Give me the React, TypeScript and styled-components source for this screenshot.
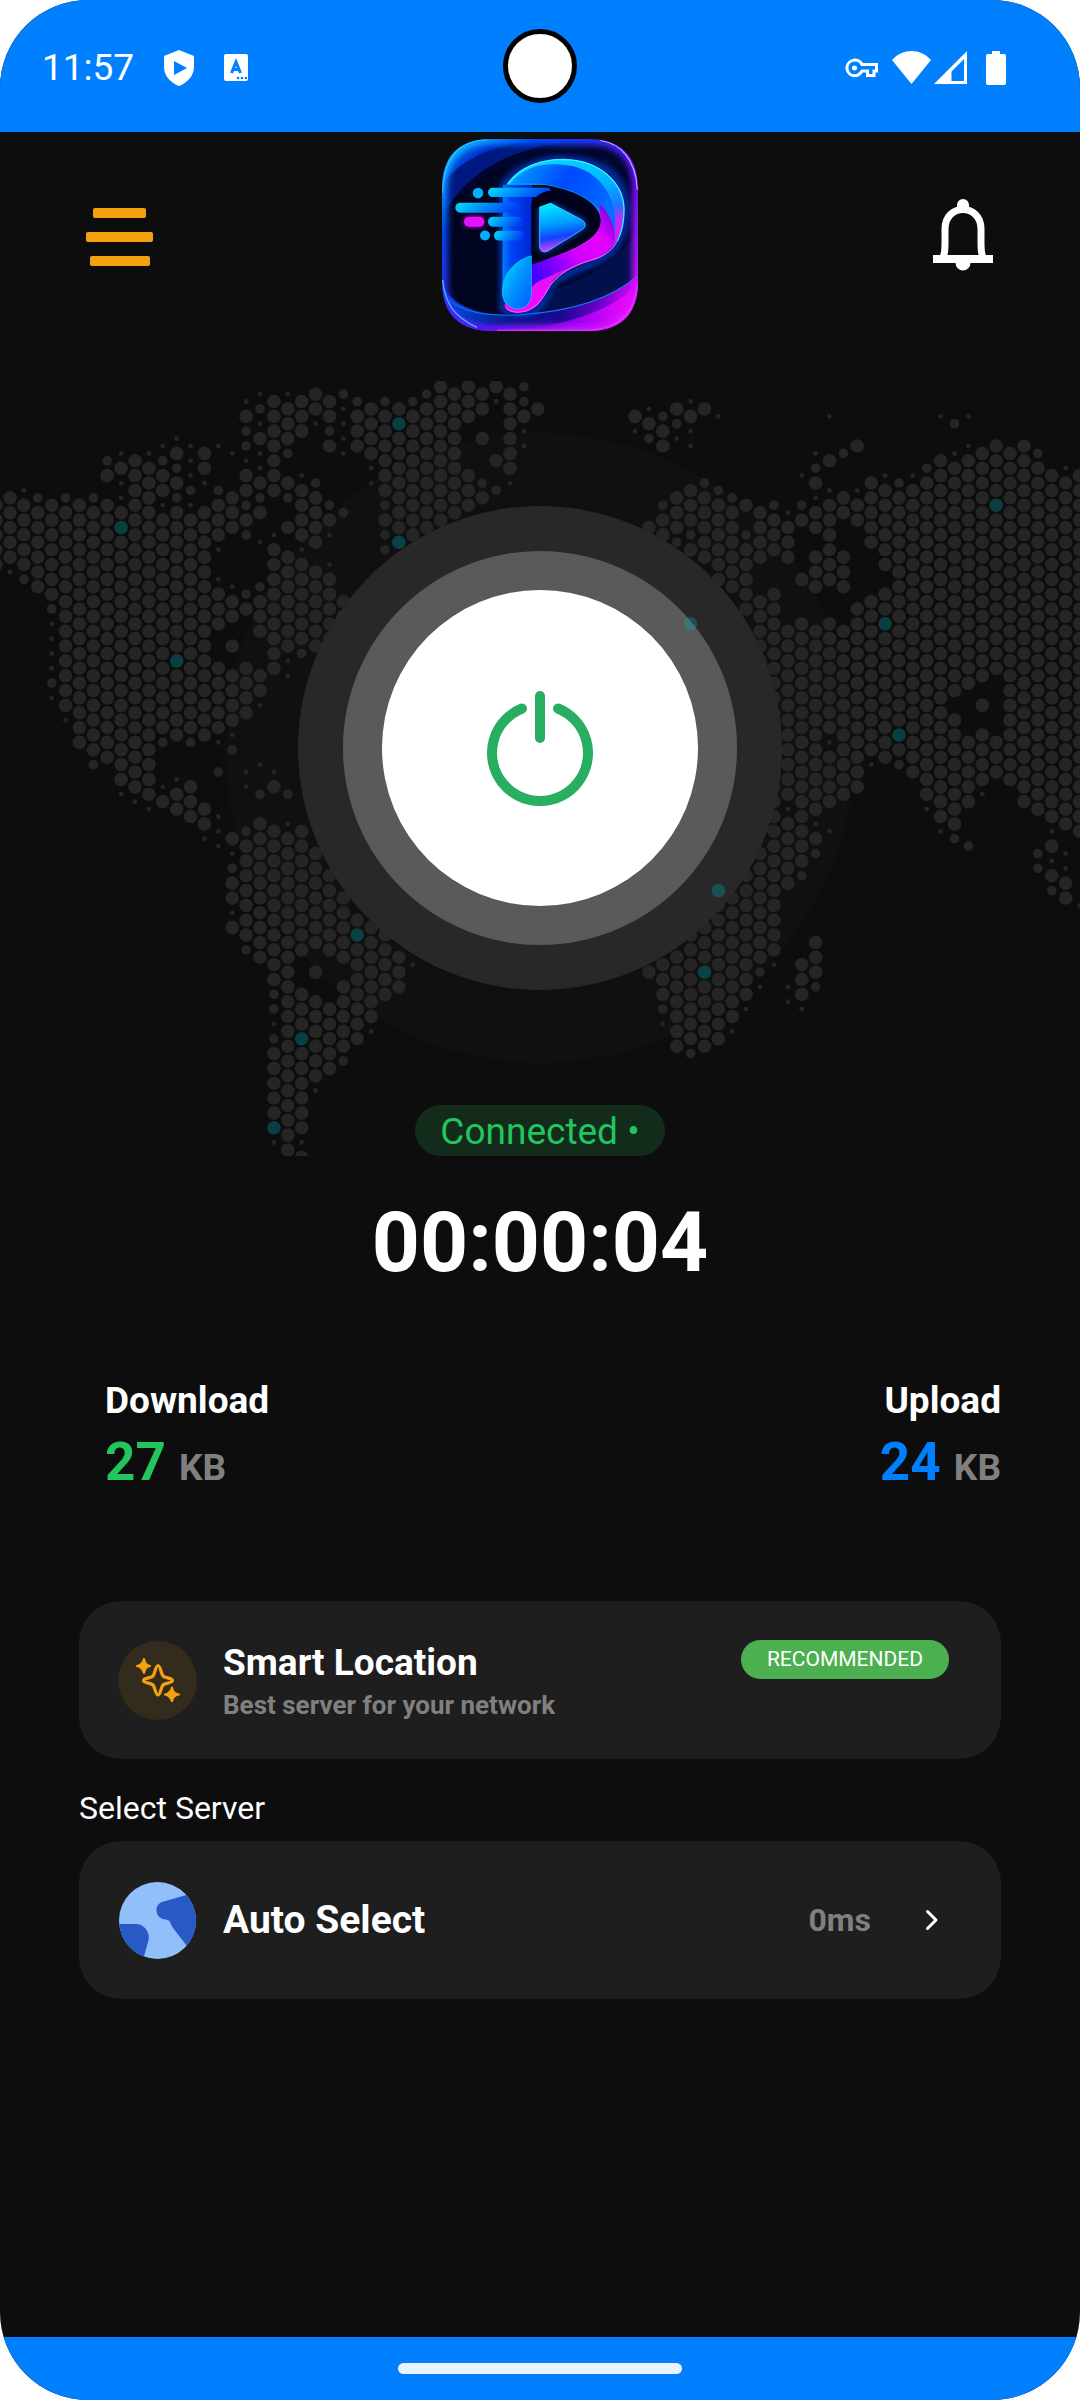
import { useState } from "react";
import styled, { createGlobalStyle } from "styled-components";

// One string per map column, rows counted in half steps from the top.
// "a-b" is a run of dots (every second row), m = medium, s = small, c = highlighted
const MAP_COLUMNS = [
  "16-24",
  "15-23 s25",
  "s14 16-24 m26",
  "m15 17-27",
  "16-28 m30 s32 s34 s36 s38 m40 s42",
  "m15 17-43 s45",
  "16-48",
  "m15 17-49 m51",
  "m10 12 16-50",
  "s9 11 s13 s15 17 c19 21-53 s55",
  "10-54 s56",
  "s9 11-55 s57",
  "s8 m10 12-14 s16 18-46 m48 s54 56",
  "s7 9 m11 13 m15 17-35 c37 39-47 s53 55-57",
  "s8 s10 s12 m14 s16 18-46 m48 54-58",
  "9-11 s13 17-47 57-59 s61",
  "s8 m14 16-20 s22 s26 28-32 38-46 s48 m52 s58 s60 s62",
  "s9 15-19 s27 29-31 35 39-45 s47 m49 61 s63 m65 67-69 s71 73",
  "s2 4 m6 m8 s10 12-14 m16 18 m20 m28 30 38-44 s52 s54 m60 62-74 m76",
  "s1 m3 s5 7 s9 s11 13 m15 17 s21 m27 29-33 39-41 s43 s51 m55 59-77",
  "2-14 s20 22-38 s52 54 60-80 m82 m84 s86 m88 90-98 c100 s102",
  "s1 3-7 m9 13 m15 19 23-35 s37 s39 m55 s59 61-103",
  "2-6 s12 14-20 s22 24-34 m36 60-76 82-86 c88 90-100 s102 104",
  "1-3 s5 m13 15-21 25-35 63-75 79 83-93 s95",
  "2-4 m6 8 m16 18 s20 s24 26-34 66-76 84-92",
  "m1 s3 s5 s7 s9 m17 29-31 69-77 81-89 m91",
  "m2 4-8 72 c74 76-88",
  "3-9 s11 s13 73-85 s87",
  "m2 4-14 m16 18 m20 m22 74-82",
  "3 c5 7-19 c21 77-81",
  "m2 4-20 s78",
  "m1 3-19",
  "0-18",
  "1-17",
  "0-4 12-16",
  "1-3 7 m13 15",
  "0 s2 10 m14",
  "1-11 s13",
  "m0 m2 4 s6 s8",
  "3",
  "",
  "",
  "",
  "",
  "",
  "",
  "4 s6",
  "s3 5 m7 19 79",
  "m4 6-8 m16 18-20 78-82 m84 s86",
  "3 m5 s7 15-19 m21 77-89",
  "s2 4 s6 s8 14-18 m20 22 c32 74-88 m90",
  "3 m13 15-23 73-77 c79 81-89",
  "s4 m14 16-26 c68 70-88",
  "m15 17-27 69-85 s87",
  "16 m20 22-30 66-82 s84",
  "17-23 29-37 63-77 m79 s81",
  "m16 18-22 28-76 s78",
  "s17 19-23 33-55 s57 59-67 s81 s83",
  "s12 m16 18 26 32-64 m66 78-82 s84",
  "s9 m11 13 s15 17-19 23-27 33-57 s59 61 m63 75-79 m81",
  "s4 10 s14 16-26 32-46 s48 50-56 s60",
  "m9 15-17 23-27 33-55",
  "8 s14 16-18 30-54",
  "13-21 29-49 s51",
  "s12 14-24 28-30 c32 34-50",
  "m13 15-45 c47 49 m51",
  "s12 14-52",
  "m11 13-55 s57",
  "s4 10-58 s60",
  "m5 s9 11-41 45-59 m61",
  "s4 s8 10-40 48-56 m62",
  "9-39 43 47-53 s55",
  "8-14 c16 18-38 48-52",
  "9-53",
  "8-56",
  "m9 11-57 m63 m65",
  "12-58 s60 62 s64 66 m68",
  "s11 13-59 s63 s65 67-69",
  "12-60 s70",
  "13-61 71",
];

const DOT_RADIUS: Record<string, number> = { l: 6.8, m: 4.8, s: 2.4, c: 6.8 };

type Dot = { x: number; y: number; kind: string };

const buildDots = (): Dot[] =>
  MAP_COLUMNS.flatMap((column, index) =>
    column
      .split(" ")
      .filter(Boolean)
      .flatMap((token) => {
        const kind = /^[msc]/.test(token) ? token[0] : "l";
        const [from, to = from] = token.replace(/^[msc]/, "").split("-").map(Number);
        const dots: Dot[] = [];
        for (let row = from; row <= to; row += 2) {
          dots.push({ x: 10 + (index - 1) * 13.89, y: 5.7 + row * 7.41, kind });
        }
        return dots;
      })
  );

const dots = buildDots();
const landDots = dots.filter((dot) => dot.kind !== "c");
const pinDots = dots.filter((dot) => dot.kind === "c");

const WorldMap = () => (
  <MapLayer viewBox="0 0 1080 775" preserveAspectRatio="xMidYMid slice" aria-hidden="true">
    <circle cx="540" cy="367" r="315" fill="#101010" />
    {landDots.map((dot) => (
      <circle key={`${dot.x}-${dot.y}`} cx={dot.x} cy={dot.y} r={DOT_RADIUS[dot.kind]} fill="#252525" />
    ))}
  </MapLayer>
);

const MapPins = () => (
  <MapLayer viewBox="0 0 1080 775" preserveAspectRatio="xMidYMid slice" aria-hidden="true">
    {pinDots.map((dot) => (
      <circle key={`${dot.x}-${dot.y}`} cx={dot.x} cy={dot.y} r={DOT_RADIUS.c} fill="rgba(0,180,190,0.3)" />
    ))}
  </MapLayer>
);

const Logo = () => (
  <svg width="196" height="192" viewBox="65 28 588 575" preserveAspectRatio="none" role="img" aria-label="Logo">
    <defs>
      <clipPath id="tile">
        <path d="M65 178C65 80 115 28 215 28H503C603 28 653 80 653 178V453C653 551 603 603 503 603H215C115 603 65 551 65 453Z" />
      </clipPath>
      <linearGradient id="edge" x1="0" y1="0" x2="1" y2="1">
        <stop offset="0" stopColor="#14d8ff" />
        <stop offset="0.25" stopColor="#0048ff" />
        <stop offset="0.6" stopColor="#6a10ff" />
        <stop offset="1" stopColor="#f31cff" />
      </linearGradient>
      <linearGradient id="corner" x1="0" y1="0" x2="1" y2="0.6">
        <stop offset="0" stopColor="#0090ff" />
        <stop offset="0.5" stopColor="#0026c8" />
        <stop offset="1" stopColor="#000a50" />
      </linearGradient>
      <linearGradient id="wave" x1="0" y1="0" x2="1" y2="0">
        <stop offset="0" stopColor="#0050e0" />
        <stop offset="0.35" stopColor="#021a80" />
        <stop offset="0.6" stopColor="#1a0890" />
        <stop offset="0.8" stopColor="#6a00c8" />
        <stop offset="1" stopColor="#e008ff" />
      </linearGradient>
      <linearGradient id="swell" x1="0" y1="0" x2="1" y2="0">
        <stop offset="0" stopColor="#4a00d0" stopOpacity="0" />
        <stop offset="0.5" stopColor="#9000f0" />
        <stop offset="1" stopColor="#ff08ff" />
      </linearGradient>
      <linearGradient id="loop" x1="0" y1="0" x2="0.25" y2="1">
        <stop offset="0" stopColor="#00e4ff" />
        <stop offset="0.35" stopColor="#00b4ff" />
        <stop offset="0.5" stopColor="#1c78ff" />
        <stop offset="0.6" stopColor="#c428ff" />
        <stop offset="1" stopColor="#ff00f0" />
      </linearGradient>
      <linearGradient id="band" x1="0" y1="0" x2="1" y2="0.5">
        <stop offset="0" stopColor="#00a8ff" />
        <stop offset="0.5" stopColor="#0048ff" />
        <stop offset="1" stopColor="#0070ff" />
      </linearGradient>
      <linearGradient id="tail" x1="0" y1="0.7" x2="1" y2="0">
        <stop offset="0" stopColor="#4a00ff" />
        <stop offset="0.4" stopColor="#d000ff" />
        <stop offset="0.7" stopColor="#e800ff" />
        <stop offset="1" stopColor="#5800d8" />
      </linearGradient>
      <linearGradient id="stem" x1="0" y1="0" x2="1" y2="0">
        <stop offset="0" stopColor="#0080ff" />
        <stop offset="0.3" stopColor="#0044f4" />
        <stop offset="1" stopColor="#0024d4" />
      </linearGradient>
      <linearGradient id="leaf" x1="0" y1="0" x2="1" y2="1">
        <stop offset="0" stopColor="#00e8ff" />
        <stop offset="0.5" stopColor="#0094ff" />
        <stop offset="1" stopColor="#0058ff" />
      </linearGradient>
      <linearGradient id="play" x1="0.2" y1="0" x2="0.35" y2="1">
        <stop offset="0" stopColor="#00f4ff" />
        <stop offset="0.45" stopColor="#009cff" />
        <stop offset="0.72" stopColor="#1440ff" />
        <stop offset="1" stopColor="#ff40ff" />
      </linearGradient>
      <linearGradient id="speed" x1="0" y1="0" x2="1" y2="0.2">
        <stop offset="0" stopColor="#00dcff" />
        <stop offset="1" stopColor="#0040f4" />
      </linearGradient>
      <filter id="glow" x="-30%" y="-30%" width="160%" height="160%">
        <feGaussianBlur stdDeviation="9" />
      </filter>
    </defs>
    <g clipPath="url(#tile)">
      <rect x="65" y="28" width="588" height="575" fill="#010420" />
      <path d="M65 28H653V330C610 390 540 440 440 480L250 110C170 150 100 210 65 260Z" fill="#01062e" />
      <path d="M65 260V28H500C260 50 140 130 65 260Z" fill="#001880" />
      <path d="M65 165V28H350C220 45 120 90 65 165Z" fill="url(#corner)" />
      <path d="M653 300C600 390 520 440 400 480L330 555C480 545 590 500 653 436Z" fill="#02104e" />
      <path d="M65 470C110 540 200 560 300 555C460 545 580 505 653 436V603H65Z" fill="url(#wave)" />
      <path d="M250 603C440 590 580 540 653 460V603Z" fill="url(#swell)" />
      <path d="M85 510C130 548 210 560 300 554C460 544 580 502 653 436" fill="none" stroke="#1c74ff" strokeWidth="3" />
      <path
        d="M65 178C65 80 115 28 215 28H503C603 28 653 80 653 178V453C653 551 603 603 503 603H215C115 603 65 551 65 453Z"
        fill="none" stroke="url(#edge)" strokeWidth="34" filter="url(#glow)"
      />
      <g filter="url(#glow)" opacity="0.8" fill="none" stroke="#0050ff" strokeWidth="16">
        <path d="M248 540V165C330 70 480 75 560 120C630 170 630 290 580 360C530 410 430 420 390 470C370 520 340 560 290 548Z" />
      </g>
      <path d="M248 165H335V470C335 560 248 560 246 490Z" fill="url(#stem)" />
      <path d="M258 165C300 105 370 88 430 88C540 90 612 160 612 240C612 330 565 370 520 388C450 412 415 430 395 455C370 500 350 548 292 548C265 548 256 538 252 525L333 402C420 370 540 340 540 272C540 215 450 175 370 165Z" fill="url(#loop)" />
      <path d="M270 162C310 112 360 100 420 104C530 110 582 190 584 270V335C570 230 470 170 350 162Z" fill="url(#band)" />
      <path d="M333 404C420 372 545 345 541 270L538 222C570 255 584 290 584 330C560 390 480 395 420 425C380 445 350 450 333 474Z" fill="url(#tail)" />
      <path d="M390 463C370 500 350 545 292 546C270 546 262 540 254 530C300 540 330 500 350 478Z" fill="#f208ff" />
      <path d="M333 405V225C336 195 365 180 410 180C470 182 541 225 541 272C541 335 430 370 333 405Z" fill="#02021c" />
      <path d="M333 378V495C330 552 248 552 246 485C248 425 290 390 333 378Z" fill="url(#leaf)" stroke="#00e0ff" strokeWidth="2" />
      <path d="M262 163C300 108 370 89 430 89C540 92 611 160 611 240C611 280 604 310 590 335" fill="none" stroke="#3ceeff" strokeWidth="4" />
      <path d="M590 335C570 370 540 383 510 392C440 412 410 440 390 465C370 500 350 547 292 547C275 547 262 541 256 532" fill="none" stroke="#ff5cff" strokeWidth="3" />
      <path d="M358 235C358 216 374 212 390 220L484 270C498 279 498 291 484 300L386 361C372 370 358 366 358 350Z" fill="#0060ff" filter="url(#glow)" />
      <path d="M358 235C358 216 374 212 390 220L484 270C498 279 498 291 484 300L386 361C372 370 358 366 358 350Z" fill="url(#play)" stroke="#58e4ff" strokeWidth="2" />
      <rect x="203" y="174" width="190" height="28" rx="14" fill="url(#speed)" />
      <path d="M333 240C336 205 352 188 400 180V215Z" fill="#02021c" />
      <rect x="105" y="219" width="194" height="30" rx="15" fill="url(#speed)" />
      <rect x="203" y="261" width="104" height="30" rx="15" fill="url(#speed)" />
      <rect x="221" y="303" width="91" height="29" rx="14" fill="url(#speed)" />
      <circle cx="173" cy="190" r="16" fill="#00b0ff" />
      <circle cx="194" cy="317" r="15" fill="#00b0ff" />
      <rect x="131" y="261" width="61" height="30" rx="15" fill="#ff10f0" filter="url(#glow)" opacity="0.7" />
      <rect x="131" y="261" width="61" height="30" rx="15" fill="#e412ff" />
      <path d="M67 190C70 90 112 32 200 30" fill="none" stroke="#28c8ff" strokeWidth="3" />
      <path d="M540 32C600 40 647 90 651 180" fill="none" stroke="#c890ff" strokeWidth="4" />
      <path d="M67 450C74 520 100 560 170 592" fill="none" stroke="#40b8ff" strokeWidth="4" />
      <path d="M651 460C645 545 600 597 500 601H230" fill="none" stroke="#f038ff" strokeWidth="3" />
    </g>
  </svg>
);

const MenuIcon = () => (
  <svg width="67" height="60" viewBox="0 0 67 60" fill="#f3a20e">
    <rect x="7" y="1" width="53" height="10" rx="2" />
    <rect x="0" y="25" width="67" height="10" rx="2" />
    <rect x="4" y="49" width="60" height="10" rx="2" />
  </svg>
);

const BellIcon = () => (
  <svg width="60" height="76" viewBox="0 0 60 76">
    <path d="M24 12V6a6 6 0 0 1 12 0v6z" fill="#fff" />
    <path d="M10 59C12 54 12 51 12 46V30C12 4 48 4 48 30V46C48 51 48 54 50 59" fill="none" stroke="#fff" strokeWidth="7" />
    <path d="M0 56H60V64H37.500A7.500 7.500 0 1 1 22.500 64H0Z" fill="#fff" />
  </svg>
);

const ShieldIcon = () => (
  <svg width="32" height="38" viewBox="0 0 32 38">
    <path fillRule="evenodd" d="M16 1L31 7V18C31 27 24 34 16 37C8 34 1 27 1 18V7ZM11 12V26L24 19Z" fill="#fff" />
  </svg>
);

const KeyboardIcon = () => (
  <svg width="24" height="28" viewBox="0 0 24 28">
    <rect width="24" height="27" rx="2" fill="#fff" />
    <path d="M7.500 19L12 8L16.500 19M9 15.500H15" fill="none" stroke="#0080ff" strokeWidth="3" />
    <g fill="#0080ff">
      <circle cx="14" cy="24" r="1.300" />
      <circle cx="18" cy="24" r="1.300" />
      <circle cx="22" cy="24" r="1.300" />
    </g>
  </svg>
);

const KeyIcon = () => (
  <svg width="34" height="20" viewBox="0 0 34 20" fill="none" stroke="#fff" strokeWidth="3">
    <path d="M17 6.500H31.500V13H29V17.500H22.500V13H17C15 16.500 12.500 17.800 9.500 17.800A7.900 7.900 0 1 1 17 6.500Z" />
    <circle cx="9.500" cy="10" r="1.500" fill="#fff" strokeWidth="2" />
  </svg>
);

const WifiIcon = () => (
  <svg width="39" height="33" viewBox="0 0 39 33">
    <path d="M19.500 33L0 9C11 -3 28 -3 39 9Z" fill="#fff" />
  </svg>
);

const SignalIcon = () => (
  <svg width="33" height="33" viewBox="0 0 33 33">
    <path fillRule="evenodd" d="M33 0V33H0ZM30 8L17.500 20.500V30H30Z" fill="#fff" />
  </svg>
);

const BatteryIcon = () => (
  <svg width="20" height="34" viewBox="0 0 20 34">
    <path d="M6 0H14V3H18A2 2 0 0 1 20 5V32A2 2 0 0 1 18 34H2A2 2 0 0 1 0 32V5A2 2 0 0 1 2 3H6Z" fill="#fff" />
  </svg>
);

const PowerIcon = () => (
  <svg width="106" height="116" viewBox="0 0 106 116" fill="none" stroke="#27ae60" strokeLinecap="round">
    <path d="M53 6V48" strokeWidth="10" />
    <path d="M35 18.500A48 48 0 1 0 71 18.500" strokeWidth="10" />
  </svg>
);

const SparklesIcon = () => (
  <svg width="44" height="44" viewBox="0 0 44 44">
    <path
      d="M22 7.500C24.500 7.500 25 16 27 18C29 20 36.500 20 36.500 22.500C36.500 25 29 25 27 27C25 29 24.500 37 22 37C19.500 37 19 29 17 27C15 25 7.500 25 7.500 22.500C7.500 20 15 20 17 18C19 16 19.500 7.500 22 7.500Z"
      fill="none" stroke="#f3a20e" strokeWidth="3.200"
    />
    <path
      d="M8 1C9 5 10 7 14 8C10 9 9 11 8 15C7 11 5 9 1 8C5 7 7 5 8 1ZM36 29.500C37 33.500 38 35.500 43 36.500C38 37.500 37 39.500 36 43.500C35 39.500 33 37.500 29 36.500C33 35.500 35 33.500 36 29.500Z"
      fill="#f3a20e" stroke="#f3a20e" strokeWidth="2" strokeLinejoin="round"
    />
  </svg>
);

const GlobeIcon = () => (
  <svg width="79" height="79" viewBox="0 0 79 79">
    <clipPath id="globe">
      <circle cx="39.500" cy="39.500" r="38.500" />
    </clipPath>
    <g clipPath="url(#globe)">
      <rect width="79" height="79" fill="#90bff9" />
      <path d="M79 11L44 21C36 24 37 36 45 38L50 39C53 41 52 43 55 47L69 65H79Z" fill="#2859c5" />
      <path d="M0 43H19C28 44 33 54 30 61L25 79H0Z" fill="#2859c5" />
    </g>
  </svg>
);

const ChevronIcon = () => (
  <svg width="14" height="22" viewBox="0 0 14 22">
    <path d="M2.500 2.500L11 11L2.500 19.500" fill="none" stroke="#fff" strokeWidth="3" strokeLinecap="round" strokeLinejoin="round" />
  </svg>
);

export default function App() {
  const [connected, setConnected] = useState(true);

  return (
    <>
      <GlobalStyle />
      <Screen>
        <StatusBar>
          <StatusGroup $gap={29}>
            <Clock>11:57</Clock>
            <ShieldIcon />
            <KeyboardIcon />
          </StatusGroup>
          <Camera />
          <StatusGroup $gap={4} $end>
            <KeyIcon />
            <SignalGroup>
              <WifiIcon />
              <SignalIcon />
            </SignalGroup>
            <BatteryIcon />
          </StatusGroup>
        </StatusBar>

        <Header>
          <IconButton aria-label="Menu">
            <MenuIcon />
          </IconButton>
          <Logo />
          <IconButton aria-label="Notifications" $end>
            <BellIcon />
          </IconButton>
        </Header>

        <Hero>
          <WorldMap />
          <OuterRing>
            <InnerRing>
              <PowerButton aria-label="Power" aria-pressed={connected} onClick={() => setConnected(!connected)}>
                <PowerIcon />
              </PowerButton>
            </InnerRing>
          </OuterRing>
          <MapPins />
          <StatusPill>{connected ? "Connected •" : "Disconnected •"}</StatusPill>
        </Hero>

        <Content>
          <Timer>00:00:04</Timer>
          <Traffic>
            <div>
              <TrafficLabel>Download</TrafficLabel>
              <TrafficValue $color="#22c55e">
                27 <small>KB</small>
              </TrafficValue>
            </div>
            <TrafficRight>
              <TrafficLabel>Upload</TrafficLabel>
              <TrafficValue $color="#0080ff">
                24 <small>KB</small>
              </TrafficValue>
            </TrafficRight>
          </Traffic>

          <Card>
            <SmartBadge>
              <SparklesIcon />
            </SmartBadge>
            <CardText>
              <CardTitle>Smart Location</CardTitle>
              <CardSubtitle>Best server for your network</CardSubtitle>
            </CardText>
            <Tag>RECOMMENDED</Tag>
          </Card>

          <SectionTitle>Select Server</SectionTitle>

          <Card>
            <GlobeIcon />
            <CardText>
              <CardTitle $large>Auto Select</CardTitle>
            </CardText>
            <Ping>0ms</Ping>
            <ChevronBox>
              <ChevronIcon />
            </ChevronBox>
          </Card>
        </Content>

        <NavBar>
          <NavHandle />
        </NavBar>
      </Screen>
    </>
  );
}

const GlobalStyle = createGlobalStyle`
  * {
    box-sizing: border-box;
  }
  body {
    margin: 0;
    background: #fff;
    font-family: Roboto, "Liberation Sans", sans-serif;
    color: #fff;
  }
  button {
    font: inherit;
    color: inherit;
    border: 0;
    padding: 0;
    background: none;
    cursor: pointer;
  }
  svg {
    display: block;
    flex-shrink: 0;
  }
`;

const Screen = styled.div`
  display: flex;
  flex-direction: column;
  min-height: 100vh;
  background: #0d0d0d;
  border-radius: 88px;
  overflow: hidden;
`;

const StatusBar = styled.div`
  display: grid;
  grid-template-columns: 1fr auto 1fr;
  align-items: center;
  height: 132px;
  padding: 0 42px;
  background: #0080ff;
`;

const StatusGroup = styled.div<{ $gap: number; $end?: boolean }>`
  display: flex;
  align-items: center;
  gap: ${(p) => p.$gap}px;
  justify-content: ${(p) => (p.$end ? "flex-end" : "flex-start")};
  padding-top: 3px;
  padding-right: ${(p) => (p.$end ? "32px" : "0")};
`;

const SignalGroup = styled.div`
  display: flex;
  gap: 3px;
  margin: 0 15px 0 9px;
`;

const Clock = styled.span`
  font-size: 37px;
  line-height: 44px;
`;

const Camera = styled.div`
  width: 74px;
  height: 74px;
  border: 5px solid #000;
  border-radius: 50%;
  background: #fff;
`;

const Header = styled.header`
  display: grid;
  grid-template-columns: 1fr auto 1fr;
  align-items: center;
  padding: 7px 87px 50px 86px;
`;

const IconButton = styled.button<{ $end?: boolean }>`
  justify-self: ${(p) => (p.$end ? "end" : "start")};
  padding-top: 4px;
`;

const Hero = styled.section`
  position: relative;
  display: flex;
  flex-direction: column;
  align-items: center;
  justify-content: space-between;
  padding-top: 125px;
  height: 775px;
`;

const MapLayer = styled.svg`
  position: absolute;
  inset: 0;
  width: 100%;
  height: 100%;
  pointer-events: none;
`;

const Ring = styled.div`
  display: grid;
  place-items: center;
  border-radius: 50%;
`;

const OuterRing = styled(Ring)`
  position: relative;
  width: 484px;
  height: 484px;
  background: #282828;
`;

const InnerRing = styled(Ring)`
  width: 394px;
  height: 394px;
  background: #5a5a5a;
`;

const PowerButton = styled.button`
  display: grid;
  place-items: center;
  width: 316px;
  height: 316px;
  border-radius: 50%;
  background: #fff;
`;

const StatusPill = styled.div`
  position: relative;
  padding: 5px 25px 3px;
  border-radius: 26px;
  background: #122b1b;
  color: #22c55e;
  font-size: 37px;
  line-height: 43px;
`;

const Content = styled.main`
  flex: 1;
  display: flex;
  flex-direction: column;
  padding: 38px 79px 60px;
`;

const Timer = styled.div`
  text-align: center;
  font-size: 84px;
  font-weight: 700;
  line-height: 98px;
`;

const Traffic = styled.div`
  display: flex;
  justify-content: space-between;
  margin: 87px 0 102px;
  padding-left: 26px;
`;

const TrafficRight = styled.div`
  text-align: right;
`;

const TrafficLabel = styled.div`
  margin-bottom: 9px;
  font-size: 37px;
  font-weight: 700;
  line-height: 43px;
`;

const TrafficValue = styled.div<{ $color: string }>`
  color: ${(p) => p.$color};
  font-size: 53px;
  font-weight: 700;
  line-height: 62px;

  small {
    color: #808080;
    font-size: 37px;
  }
`;

const Card = styled.button`
  display: flex;
  align-items: center;
  min-height: 158px;
  padding: 39px 52px 39px 39px;
  border-radius: 42px;
  background: #1e1e1e;
  text-align: left;
`;

const SmartBadge = styled.span`
  display: grid;
  place-items: center;
  width: 79px;
  height: 79px;
  border-radius: 50%;
  background: #332b1c;
`;

const CardText = styled.span`
  flex: 1;
  display: flex;
  flex-direction: column;
  gap: 6px;
  margin-left: 26px;
`;

const CardTitle = styled.span<{ $large?: boolean }>`
  font-size: ${(p) => (p.$large ? 39 : 37)}px;
  font-weight: 700;
  line-height: 43px;
`;

const CardSubtitle = styled.span`
  color: #808080;
  font-size: 26px;
  font-weight: 700;
  line-height: 30px;
`;

const Tag = styled.span`
  align-self: flex-start;
  padding: 7px 26px;
  border-radius: 20px;
  background: #4caf50;
  font-size: 21px;
  line-height: 25px;
`;

const SectionTitle = styled.h2`
  margin: 30px 0 14px;
  font-size: 32px;
  font-weight: 400;
  line-height: 38px;
`;

const Ping = styled.span`
  color: #808080;
  font-size: 32px;
  font-weight: 700;
  line-height: 38px;
`;

const ChevronBox = styled.span`
  margin: 0 10px 0 54px;
`;

const NavBar = styled.footer`
  display: grid;
  place-items: center;
  height: 63px;
  background: #0080ff;
`;

const NavHandle = styled.div`
  width: 284px;
  height: 11px;
  border-radius: 6px;
  background: #e9f4ff;
`;
